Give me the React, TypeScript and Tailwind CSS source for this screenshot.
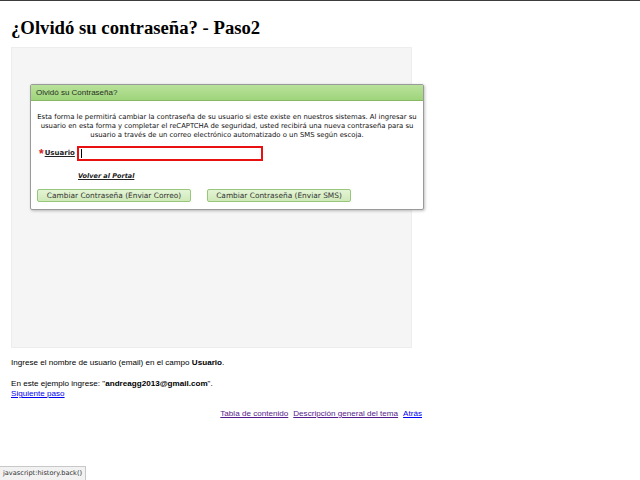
export default function App() {
  return (
    <div className="relative min-h-[480px] border-t border-[#3c3c3c] bg-white font-['Liberation_Sans',Arial,sans-serif] text-black">
      <div className="pl-[11px]">
        <h1 className="pt-[16px] font-['Liberation_Serif','Times_New_Roman',serif] text-[18.7px] font-bold leading-[22px]">
          ¿Olvidó su contraseña? - Paso2
        </h1>

        {/* screenshot of the form */}
        <div className="mt-[8px] h-[301px] w-[401px] border border-[#ededed] bg-[#f5f5f5] pl-[18px] pt-[36px]">
          <div className="w-[394px] rounded-[2px] border border-[#9a9a9a] bg-white shadow-[1px_1px_3px_rgba(0,0,0,0.25)]">
            <div className="h-[16px] border-b border-[#86b866] bg-gradient-to-b from-[#b9e29a] to-[#9fd47b] pl-[5px] text-[8px] leading-[15px] text-[#26301f]">
              Olvidó su Contraseña?
            </div>
            <div className="px-[6px] pb-[7px] pt-[12px]">
              <p className="text-center font-['DejaVu_Sans',Verdana,sans-serif] text-[6.85px] leading-[9px] text-[#111]">
                Esta forma le permitirá cambiar la contraseña de su usuario si este existe en nuestros sistemas. Al ingresar su
                <br />
                usuario en esta forma y completar el reCAPTCHA de seguridad, usted recibirá una nueva contraseña para su
                <br />
                usuario a través de un correo electrónico automatizado o un SMS según escoja.
              </p>
              <div className="mt-[6px] flex items-center pl-[2px]">
                <span className="text-[12px] font-bold leading-none text-[#d42020]">*</span>
                <span className="ml-px font-['DejaVu_Sans',Verdana,sans-serif] text-[7px] font-bold text-[#222] underline">
                  Usuario
                </span>
                <div className="ml-[2px] flex h-[15px] w-[186px] items-center border-2 border-[#e81010] bg-white pl-[2px]">
                  <div className="h-[9px] w-px bg-black" />
                </div>
              </div>
              <div className="mt-[11px] pl-[41px] font-['DejaVu_Sans',Verdana,sans-serif] text-[6.5px] font-bold italic text-[#222] underline">
                Volver al Portal
              </div>
              <div className="mt-[7px] flex gap-[16px]">
                <button className="h-[13px] w-[154px] rounded-[2px] border border-[#97c77a] bg-gradient-to-b from-[#e4f4d6] to-[#cfe9b8] font-['DejaVu_Sans',Verdana,sans-serif] text-[7.4px] leading-[11px] text-[#333]">
                  Cambiar Contraseña (Enviar Correo)
                </button>
                <button className="h-[13px] w-[144px] rounded-[2px] border border-[#97c77a] bg-gradient-to-b from-[#e4f4d6] to-[#cfe9b8] font-['DejaVu_Sans',Verdana,sans-serif] text-[7.4px] leading-[11px] text-[#333]">
                  Cambiar Contraseña (Enviar SMS)
                </button>
              </div>
            </div>
          </div>
        </div>

        <div className="mt-[10px] text-[8.1px] leading-[10px]">
          <p>
            Ingrese el nombre de usuario (email) en el campo <b>Usuario</b>.
          </p>
          <p className="mt-[11px]">
            En este ejemplo ingrese: "<b>andreagg2013@gmail.com</b>".
          </p>
          <a href="#" className="text-[#0000ee] underline">
            Siguiente paso
          </a>
        </div>

        <div className="mt-[10px] flex w-[411px] justify-end gap-[5px] text-[8.1px] leading-[10px]">
          <a href="#" className="text-[#551a8b] underline">Tabla de contenido</a>
          <a href="#" className="text-[#551a8b] underline">Descripción general del tema</a>
          <a href="#" className="text-[#0000ee] underline">Atrás</a>
        </div>
      </div>

      <div className="fixed bottom-0 left-0 h-[14px] border-r border-t border-[#c8c8c8] bg-[#f2f2f2] px-[3px] font-['DejaVu_Sans',Verdana,sans-serif] text-[6.6px] leading-[13px] text-[#333]">
        javascript:history.back()
      </div>
    </div>
  )
}
